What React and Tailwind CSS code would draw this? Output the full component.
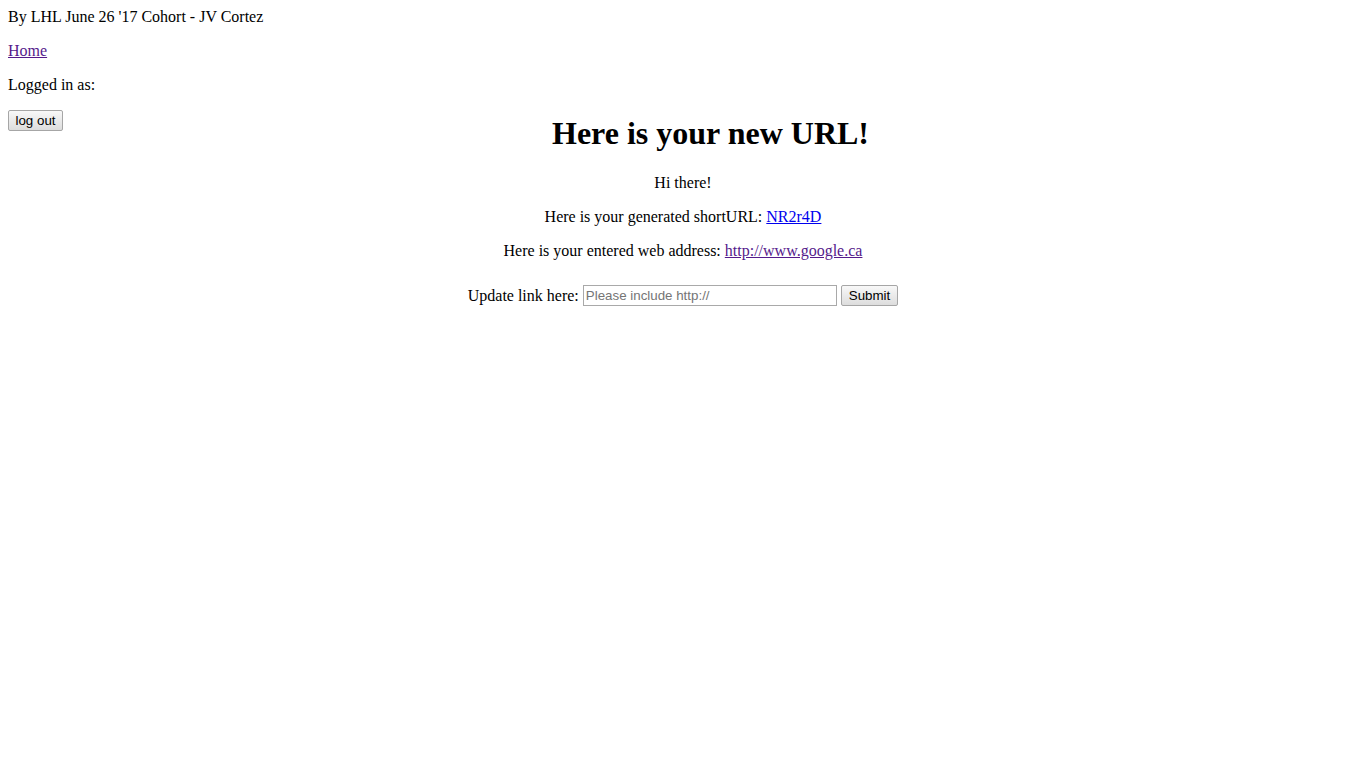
export default function App() {
  return (
    <div className="min-h-screen bg-white m-0 px-2 pt-2 font-['Liberation_Serif',serif] text-base leading-[18px] text-black">
      <p className="mb-4">By LHL June 26 '17 Cohort - JV Cortez</p>
      <p className="mb-4">
        <a href="#" className="text-[#551a8b] underline">Home</a>
      </p>
      <p className="mb-4">Logged in as: </p>

      <form className="float-left">
        <button
          type="button"
          className="h-[21px] px-[6.5px] font-['Liberation_Sans',sans-serif] text-[13.33px] leading-none text-black border border-[#a6a6a6] rounded-[2px] bg-gradient-to-b from-[#f8f8f8] to-[#dddddd]"
        >
          log out
        </button>
      </form>

      <h1 className="mt-[21px] mb-[22px] text-center text-[32px] font-bold leading-[37px]">
        Here is your new URL!
      </h1>

      <div className="text-center">
        <p className="mb-4">Hi there!</p>
        <p className="mb-4">
          Here is your generated shortURL:{" "}
          <a href="#" className="text-[#0000ee] underline">NR2r4D</a>
        </p>
        <p className="mb-4">
          Here is your entered web address:{" "}
          <a href="#" className="text-[#551a8b] underline">http://www.google.ca</a>
        </p>
        <form className="flex items-center justify-center gap-1 mt-[25px]">
          <label>Update link here:</label>
          <input
            type="text"
            placeholder="Please include http://"
            className="w-[254px] h-[21px] px-[2px] border border-[#a9a9a9] font-['Liberation_Sans',sans-serif] text-[13.33px] text-black placeholder:text-[#757575] outline-none"
          />
          <button
            type="button"
            className="h-[21px] px-[7px] font-['Liberation_Sans',sans-serif] text-[13.33px] leading-none text-black border border-[#a6a6a6] rounded-[2px] bg-gradient-to-b from-[#f8f8f8] to-[#dddddd]"
          >
            Submit
          </button>
        </form>
      </div>
    </div>
  );
}
